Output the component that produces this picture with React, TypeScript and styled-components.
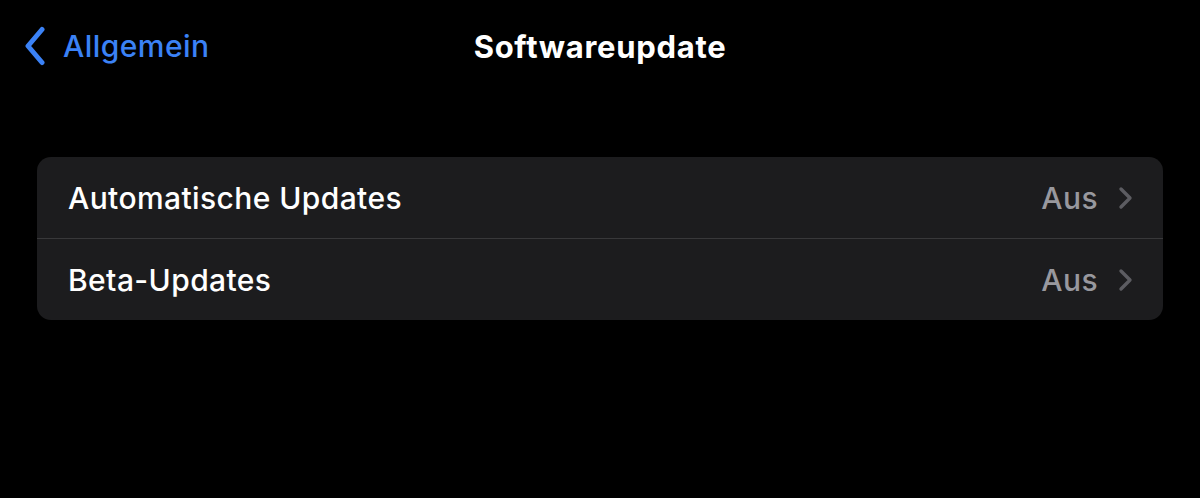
import styled, { createGlobalStyle } from 'styled-components'

const GlobalStyle = createGlobalStyle`
  html, body {
    margin: 0;
    padding: 0;
    background: #000000;
  }
  body {
    font-family: Inter, "Noto Sans", sans-serif;
    -webkit-font-smoothing: antialiased;
  }
`

const Page = styled.div`
  width: 1200px;
  height: 498px;
  background: #000000;
  display: flex;
  flex-direction: column;
`

const NavBar = styled.div`
  height: 92px;
  display: grid;
  grid-template-columns: 1fr auto 1fr;
  align-items: center;
  padding: 0 24px;
  box-sizing: border-box;
`

const BackButton = styled.div`
  display: flex;
  align-items: center;
  gap: 17px;
  color: #3b82f6;
  font-size: 30px;
  font-weight: 500;
  letter-spacing: 0.45px;
`

const Title = styled.div`
  color: #ffffff;
  font-size: 31px;
  font-weight: 700;
  letter-spacing: 0.7px;
`

const Content = styled.div`
  padding: 65px 37px 0 37px;
`

const Group = styled.div`
  background: #1c1c1e;
  border-radius: 14px;
  overflow: hidden;
`

const Row = styled.div<{ $divider?: boolean }>`
  height: 81px;
  display: flex;
  align-items: center;
  padding: 0 30px 0 31px;
  border-top: ${({ $divider }) => ($divider ? '1px solid #38383a' : 'none')};
`

const Label = styled.div`
  flex: 1;
  color: #ffffff;
  font-size: 30px;
  font-weight: 500;
  letter-spacing: 0.4px;
`

const Value = styled.div`
  color: #98989e;
  font-size: 30px;
  font-weight: 500;
  letter-spacing: 0.4px;
  margin-right: 20px;
`

const BackChevron = () => (
  <svg width="22" height="40" viewBox="0 0 22 40">
    <path d="M18 3.5 L4 20 L18 36.5" fill="none" stroke="#3b82f6" strokeWidth="5" strokeLinecap="round" strokeLinejoin="round" />
  </svg>
)

const RowChevron = () => (
  <svg width="15" height="24" viewBox="0 0 15 24">
    <path d="M3 3 L12 12 L3 21" fill="none" stroke="#5c5c61" strokeWidth="3.4" strokeLinecap="round" strokeLinejoin="round" />
  </svg>
)

const rows = [
  { label: 'Automatische Updates', value: 'Aus' },
  { label: 'Beta-Updates', value: 'Aus' },
]

export default function App() {
  return (
    <Page>
      <GlobalStyle />
      <NavBar>
        <BackButton>
          <BackChevron />
          Allgemein
        </BackButton>
        <Title>Softwareupdate</Title>
        <div />
      </NavBar>
      <Content>
        <Group>
          {rows.map((r, i) => (
            <Row key={r.label} $divider={i > 0}>
              <Label>{r.label}</Label>
              <Value>{r.value}</Value>
              <RowChevron />
            </Row>
          ))}
        </Group>
      </Content>
    </Page>
  )
}
